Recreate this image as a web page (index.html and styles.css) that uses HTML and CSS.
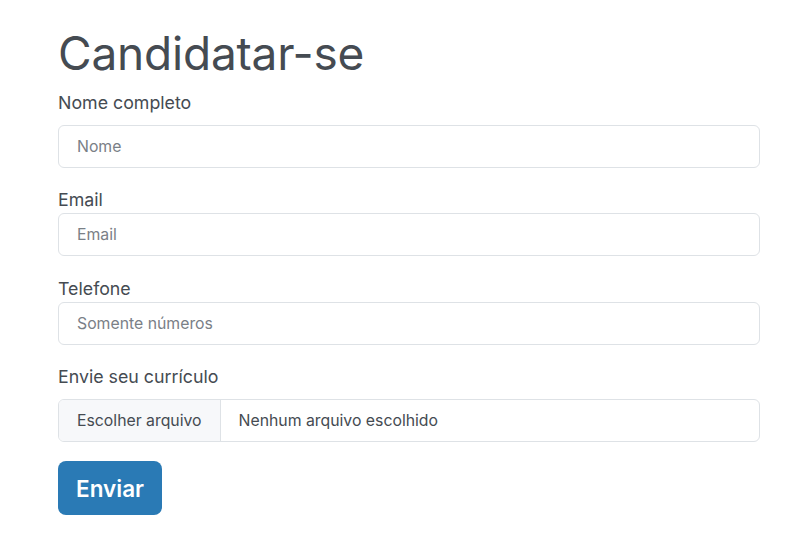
FILE: index.html
```html
<!DOCTYPE html>
<html lang="pt-BR">
<head>
<meta charset="utf-8">
<title>Candidatar-se</title>
<link rel="stylesheet" href="styles.css">
</head>
<body>
<main class="page">
  <h1 class="title">Candidatar-se</h1>
  <form class="form">
    <div class="field field-first">
      <label class="label">Nome completo</label>
      <div class="input"><span class="placeholder">Nome</span></div>
    </div>
    <div class="field">
      <label class="label">Email</label>
      <div class="input"><span class="placeholder">Email</span></div>
    </div>
    <div class="field">
      <label class="label">Telefone</label>
      <div class="input"><span class="placeholder">Somente números</span></div>
    </div>
    <div class="field field-file">
      <label class="label">Envie seu currículo</label>
      <div class="file">
        <span class="file-btn">Escolher arquivo</span>
        <span class="file-name">Nenhum arquivo escolhido</span>
      </div>
    </div>
    <button type="button" class="submit">Enviar</button>
  </form>
</main>
</body>
</html>
```
FILE: styles.css
```css
* { box-sizing: border-box; }
html, body { margin: 0; padding: 0; background: #fff; }
body {
  font-family: Inter, "Noto Sans", sans-serif;
  color: #454b52;
}
.page {
  width: 702px;
  margin-left: 58px;
  padding-top: 25px;
}
.title {
  margin: 0;
  font-size: 46px;
  font-weight: 400;
  line-height: 56px;
  color: #454b52;
  letter-spacing: -0.2px;
}
.form { display: flex; flex-direction: column; }
.field { display: flex; flex-direction: column; margin-top: 20.3px; }
.field-first { margin-top: 10px; }
.label {
  font-size: 17.8px;
  line-height: 24px;
  margin-bottom: 1px;
}
.field-first .label { margin-bottom: 10px; }
.field-file .label { margin-bottom: 10.4px; }
.input {
  height: 43px;
  border: 1px solid #dee2e6;
  border-radius: 6px;
  padding: 0 18px;
  display: flex;
  align-items: center;
}
.placeholder { font-size: 15.8px; color: #7a8087; }
.file {
  height: 43px;
  border: 1px solid #dee2e6;
  border-radius: 6px;
  display: flex;
  overflow: hidden;
  font-size: 15.8px;
}
.file-btn {
  background: #f7f8fa;
  border-right: 1px solid #dee2e6;
  padding: 0 18px;
  display: flex;
  align-items: center;
  color: #454b52;
}
.file-name {
  padding: 0 18px;
  display: flex;
  align-items: center;
  color: #454b52;
}
.submit {
  margin-top: 19px;
  align-self: flex-start;
  width: 104px;
  height: 54px;
  border: none;
  border-radius: 8px;
  background: #2a7ab5;
  color: #fff;
  font-family: Inter, "Noto Sans", sans-serif;
  font-size: 22.5px;
  font-weight: 600;
}
```
